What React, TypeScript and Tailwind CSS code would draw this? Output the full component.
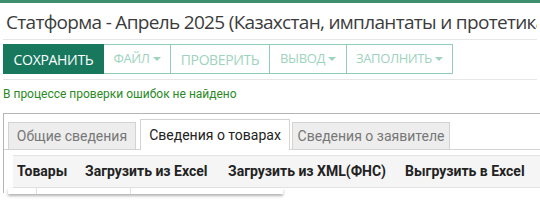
import React from 'react';

const Caret: React.FC = () => (
  <span className="ml-[3px] inline-block h-0 w-0 border-x-[4px] border-t-[4px] border-x-transparent border-t-[#9ed3bd] align-middle" />
);

const App: React.FC = () => {
  const tools = [
    { label: 'Файл', caret: true, w: 'w-[67px]', size: 'text-[13px]' },
    { label: 'Проверить', caret: false, w: 'w-[99px]', size: 'text-[14px]' },
    { label: 'Вывод', caret: true, w: 'w-[77px]', size: 'text-[13px]' },
    { label: 'Заполнить', caret: true, w: 'w-[106px]', size: 'text-[13px]' },
  ];

  return (
    <div className="h-[209px] w-[540px] overflow-hidden bg-white font-['Open_Sans',sans-serif]">
      <div className="h-[3px] bg-[#3f8f6f]" />
      <div className="mx-[3px] h-[37px] overflow-hidden whitespace-nowrap border-b border-[#e6e6e6] pl-[3px] pt-[6px] text-[19px] leading-[26px] tracking-[-0.68px] text-[#3c3c3c]">
        Статформа - Апрель 2025 (Казахстан, имплантаты и протетика)
      </div>

      <div className="mx-[3px] flex border-b border-[#e6e6e6] pb-[5px] pt-[4px]">
        <button className="h-[30px] w-[101px] bg-[#17785e] text-[14px] uppercase tracking-[-0.3px] text-white">
          Сохранить
        </button>
        {tools.map((t) => (
          <button
            key={t.label}
            className={`flex h-[30px] ${t.w} items-center justify-center border-y border-r border-[#8fcfb6] ${t.size} uppercase tracking-[-0.4px] text-[#9ed3bd]`}
          >
            <span>{t.label}</span>
            {t.caret && <Caret />}
          </button>
        ))}
      </div>

      <div className="px-[3px] pt-[6px] font-['Roboto',sans-serif] text-[12px] leading-[16px] text-[#2b8a1f]">
        В процессе проверки ошибок не найдено
      </div>

      <div className="relative ml-[3px] mt-[11px] h-[80px] border-l border-t border-[#b4b4b4] font-['Roboto',sans-serif]">
        <div className="flex items-end px-[4px] pt-[5px]">
          <div className="flex h-[27px] w-[128px] items-center justify-center border border-b-0 border-[#d3d3d3] bg-[#ededed] text-[14px] text-[#777]">
            Общие сведения
          </div>
          <div className="-mb-px ml-[4px] flex h-[31px] w-[150px] items-center justify-center border border-b-0 border-[#d3d3d3] bg-white text-[14px] text-[#222]">
            Сведения о товарах
          </div>
          <div className="ml-[2px] flex h-[27px] w-[158px] items-center justify-center border border-b-0 border-[#d3d3d3] bg-[#ededed] text-[14px] text-[#777]">
            Сведения о заявителе
          </div>
        </div>
        <div className="border-t border-[#d3d3d3] pl-[9px] pt-[5px]">
          <div className="flex h-[33px] items-center border-y border-[#e3e3e3] bg-[#f5f5f5] pl-[4px] text-[14px] font-bold text-[#222]">
            <span className="w-[68px]">Товары</span>
            <span className="w-[143px]">Загрузить из Excel</span>
            <span className="w-[177px]">Загрузить из XML(ФНС)</span>
            <span>Выгрузить в Excel</span>
          </div>
          <div className="-ml-[5px] flex h-[6px] w-[275px] shadow-[0_2px_3px_rgba(0,0,0,0.3)]">
            <div className="w-[29px] border-r border-[#e0e0e0]" />
            <div className="w-[94px] border-r border-[#e0e0e0]" />
          </div>
        </div>
      </div>
    </div>
  );
};

export default App;
